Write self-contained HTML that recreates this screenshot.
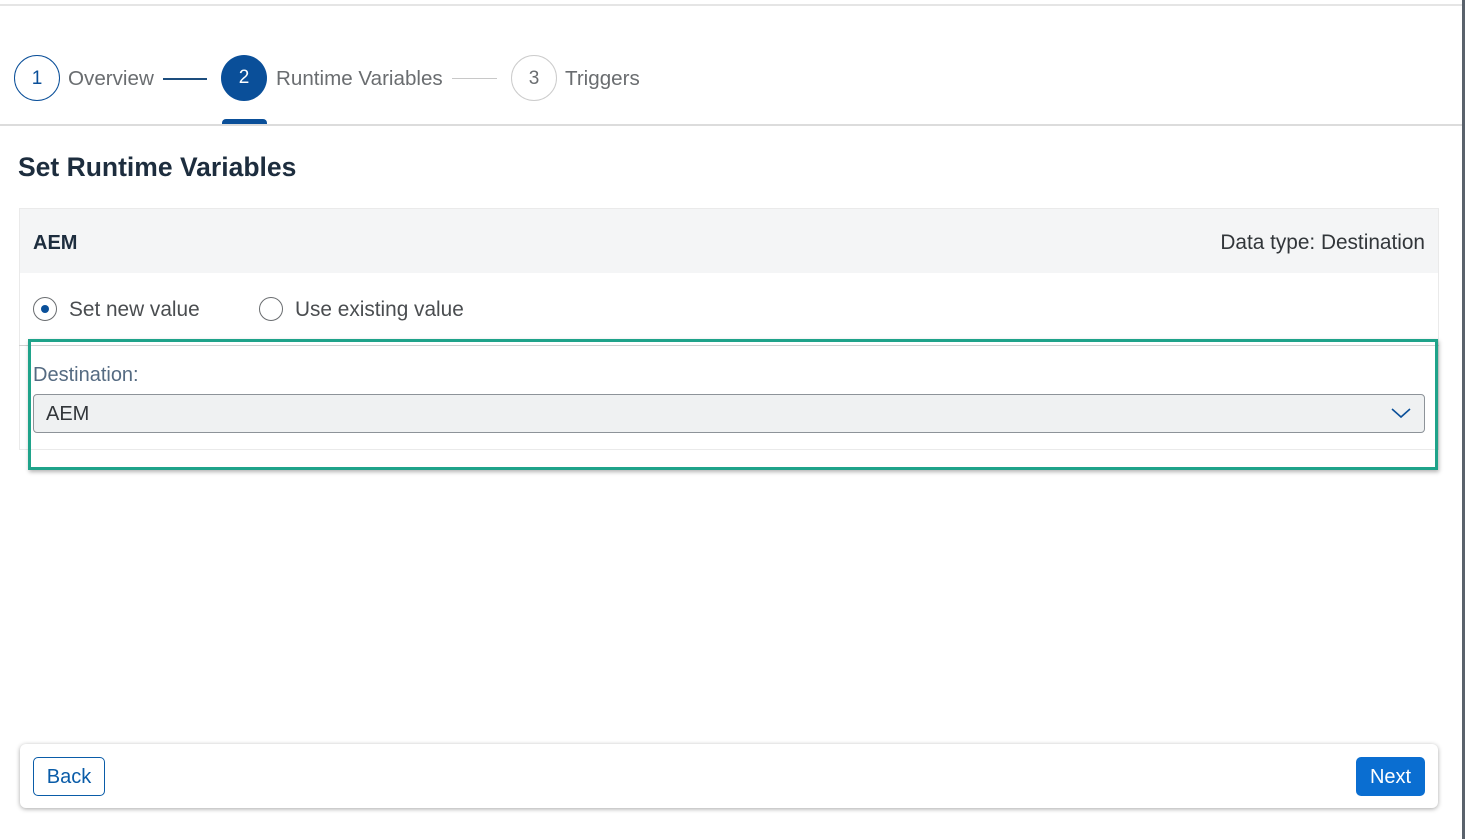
<!DOCTYPE html>
<html><head><meta charset="utf-8"><style>
*{box-sizing:border-box;margin:0;padding:0}
body{width:1466px;height:839px;background:#fff;font-family:"Liberation Sans",sans-serif;position:relative;overflow:hidden;color:#32363a}
.abs{position:absolute}
.circ{position:absolute;width:46px;height:46px;border-radius:50%;text-align:center;line-height:46px;font-size:19px}
.lbl{position:absolute;font-size:20.6px;color:#6a6d70;top:67px}
</style></head><body>
<div class="abs" style="left:0;top:4px;width:1462px;height:2px;background:#e5e5e5"></div>
<div class="abs" style="left:1462px;top:0;width:3px;height:839px;background:#5a626c"></div>

<div class="circ" style="left:14px;top:55px;border:1px solid #0a4f99;color:#0a4f99">1</div>
<div class="lbl" style="left:68px">Overview</div>
<div class="abs" style="left:163px;top:78px;width:44px;height:2px;background:#1d4d7e"></div>
<div class="circ" style="left:221px;top:55px;background:#0a4f99;color:#fff">2</div>
<div class="lbl" style="left:276px">Runtime Variables</div>
<div class="abs" style="left:452px;top:78px;width:45px;height:1px;background:#c8c8c8"></div>
<div class="circ" style="left:511px;top:55px;border:1px solid #ccc;color:#6a6d70">3</div>
<div class="lbl" style="left:565px">Triggers</div>
<div class="abs" style="left:222px;top:119px;width:45px;height:6px;background:#0a4f99;border-radius:4px 4px 0 0"></div>
<div class="abs" style="left:0;top:124px;width:1462px;height:2px;background:#dcdcdc"></div>

<div class="abs" style="left:18px;top:152px;font-size:26.5px;font-weight:bold;color:#1d2d3e">Set Runtime Variables</div>

<div class="abs" style="left:19px;top:208px;width:1420px;height:242px;border:1px solid #eaeaea;background:#fff"></div>
<div class="abs" style="left:20px;top:209px;width:1418px;height:64px;background:#f4f5f6"></div>
<div class="abs" style="left:33px;top:232px;font-size:20px;font-weight:bold;color:#1d2d3e">AEM</div>
<div class="abs" style="right:41px;top:231px;font-size:20.8px;color:#32363a">Data type: Destination</div>

<div class="abs" style="left:33px;top:297px;width:24px;height:24px;border:1px solid #6a6d70;border-radius:50%"></div>
<div class="abs" style="left:41px;top:305px;width:8px;height:8px;background:#0a4f99;border-radius:50%"></div>
<div class="abs" style="left:69px;top:298px;font-size:20.8px;color:#4a4d50">Set new value</div>
<div class="abs" style="left:259px;top:297px;width:24px;height:24px;border:1px solid #6a6d70;border-radius:50%"></div>
<div class="abs" style="left:295px;top:298px;font-size:20.8px;color:#4a4d50">Use existing value</div>
<div class="abs" style="left:19px;top:345px;width:1420px;height:1px;background:#d0d0d0"></div>

<div class="abs" style="left:33px;top:364px;font-size:20px;color:#556b82">Destination:</div>
<div class="abs" style="left:33px;top:394px;width:1392px;height:39px;background:#eff1f2;border:1px solid #8d9399;border-radius:4px"></div>
<div class="abs" style="left:46px;top:403px;font-size:20px;color:#32363a">AEM</div>
<svg class="abs" style="left:1390px;top:405px" width="22" height="16" viewBox="0 0 22 16"><path d="M2 4 L11 12 L20 4" fill="none" stroke="#0a4f99" stroke-width="1.6"/></svg>

<div class="abs" style="left:28px;top:339px;width:1410px;height:131px;border:3px solid #1fa38a;box-shadow:1px 2px 4px rgba(0,0,0,.3)"></div>

<div class="abs" style="left:20px;top:744px;width:1418px;height:64px;background:#fff;border-radius:6px;box-shadow:0 1px 5px rgba(0,0,0,.35)"></div>
<div class="abs" style="left:33px;top:757px;width:72px;height:39px;border:1px solid #0a5ca8;border-radius:5px;color:#0a5ca8;font-size:20px;text-align:center;line-height:39px">Back</div>
<div class="abs" style="left:1356px;top:757px;width:69px;height:39px;background:#0a6ed1;border-radius:5px;color:#fff;font-size:20px;text-align:center;line-height:41px">Next</div>
</body></html>
